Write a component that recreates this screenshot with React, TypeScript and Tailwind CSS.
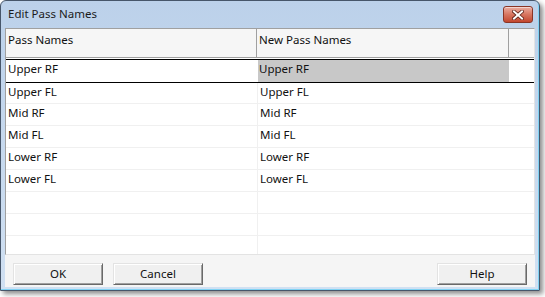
export default function App() {
  const rows: string[] = ["Upper FL", "Mid RF", "Mid FL", "Lower RF", "Lower FL", "", ""];
  const font = "font-['Noto_Sans',sans-serif]";
  return (
    <div className={`w-[545px] h-[297px] bg-white ${font} text-[11.5px] text-[#111]`}>
      <div className="w-[540px] h-[291px] rounded-t-[6px] border border-[#47566a] bg-linear-to-b from-[#bcd1ea] to-[#d0e0f2] shadow-[3px_3px_5px_rgba(0,0,0,0.45),inset_-1px_-1px_0_#80d2f3] flex flex-col">
        {/* Title bar */}
        <div className="h-[27px] flex items-start pl-[7px] pr-[6px] shrink-0">
          <div className="leading-[14px] mt-[6px] text-[#1b1b1b]">Edit Pass Names</div>
          <div className="ml-auto mt-[5px] w-[30px] h-[17px] rounded-[3px] border border-[#8a3526] bg-linear-to-b from-[#eaaea2] via-[#d77560] to-[#c2462e] shadow-[inset_0_1px_0_rgba(255,255,255,0.5)] flex items-center justify-center">
            <svg width="12" height="10" viewBox="0 0 12 10">
              <path d="M2 1.5 L10 8.5 M10 1.5 L2 8.5" stroke="#5b2016" strokeWidth="3.6" strokeLinecap="square" />
              <path d="M2 1.5 L10 8.5 M10 1.5 L2 8.5" stroke="#ffffff" strokeWidth="2" strokeLinecap="square" />
            </svg>
          </div>
        </div>
        {/* Client area */}
        <div className="mx-[4px] mb-[3px] flex-1 bg-[#f5f5f5] flex flex-col">
          {/* Grid */}
          <div className="h-[227px] shrink-0 border border-t-[#a0a0a0] border-l-[#a0a0a0] border-r-[#e3e3e3] border-b-[#e3e3e3] bg-white flex flex-col">
            {/* Header */}
            <div className="h-[29px] shrink-0 bg-[#f6f6f6] border-b border-[#a0a0a0] flex">
              <div className="w-[251px] border-r border-[#a0a0a0] pl-[2px] pt-[4px] leading-[14px]">Pass Names</div>
              <div className="w-[252px] border-r border-[#a0a0a0] pl-[2px] pt-[4px] leading-[14px]">New Pass Names</div>
              <div className="flex-1" />
            </div>
            <div className="h-[1px] shrink-0" />
            {/* Selected row */}
            <div className="h-[24px] shrink-0 border-y border-black flex">
              <div className="w-[252px] pl-[2px] pt-[2px] leading-[14px]">Upper RF</div>
              <div className="w-[251px] bg-[#c8c8c8] pl-[1px] pt-[2px] leading-[14px]">Upper RF</div>
              <div className="flex-1" />
            </div>
            {rows.map((r, i) => (
              <div
                key={i}
                className={`${i === 0 ? "h-[21px]" : "h-[22px]"} shrink-0 border-b border-[#f0f0f0] flex`}
              >
                <div className="w-[252px] border-r border-[#f0f0f0] pl-[2px] pt-[2px] leading-[14px]">{r}</div>
                <div className="w-[251px] pl-[2px] pt-[2px] leading-[14px]">{r}</div>
                <div className="flex-1" />
              </div>
            ))}
            <div className="flex-1 flex">
              <div className="w-[252px] border-r border-[#f0f0f0]" />
            </div>
          </div>
          {/* Buttons */}
          <div className="flex items-start pt-[8px] px-[8px]">
            <button className="w-[90px] h-[22px] border border-t-[#e3e3e3] border-l-[#e3e3e3] border-r-[#696969] border-b-[#696969] shadow-[inset_1px_1px_0_#ffffff,inset_-1px_-1px_0_#a0a0a0] bg-[#f0f0f0] flex items-center justify-center leading-[14px]">OK</button>
            <button className="ml-[10px] w-[90px] h-[22px] border border-t-[#e3e3e3] border-l-[#e3e3e3] border-r-[#696969] border-b-[#696969] shadow-[inset_1px_1px_0_#ffffff,inset_-1px_-1px_0_#a0a0a0] bg-[#f0f0f0] flex items-center justify-center leading-[14px]">Cancel</button>
            <button className="ml-auto w-[90px] h-[22px] border border-t-[#e3e3e3] border-l-[#e3e3e3] border-r-[#696969] border-b-[#696969] shadow-[inset_1px_1px_0_#ffffff,inset_-1px_-1px_0_#a0a0a0] bg-[#f0f0f0] flex items-center justify-center leading-[14px]">Help</button>
          </div>
        </div>
      </div>
    </div>
  );
}
